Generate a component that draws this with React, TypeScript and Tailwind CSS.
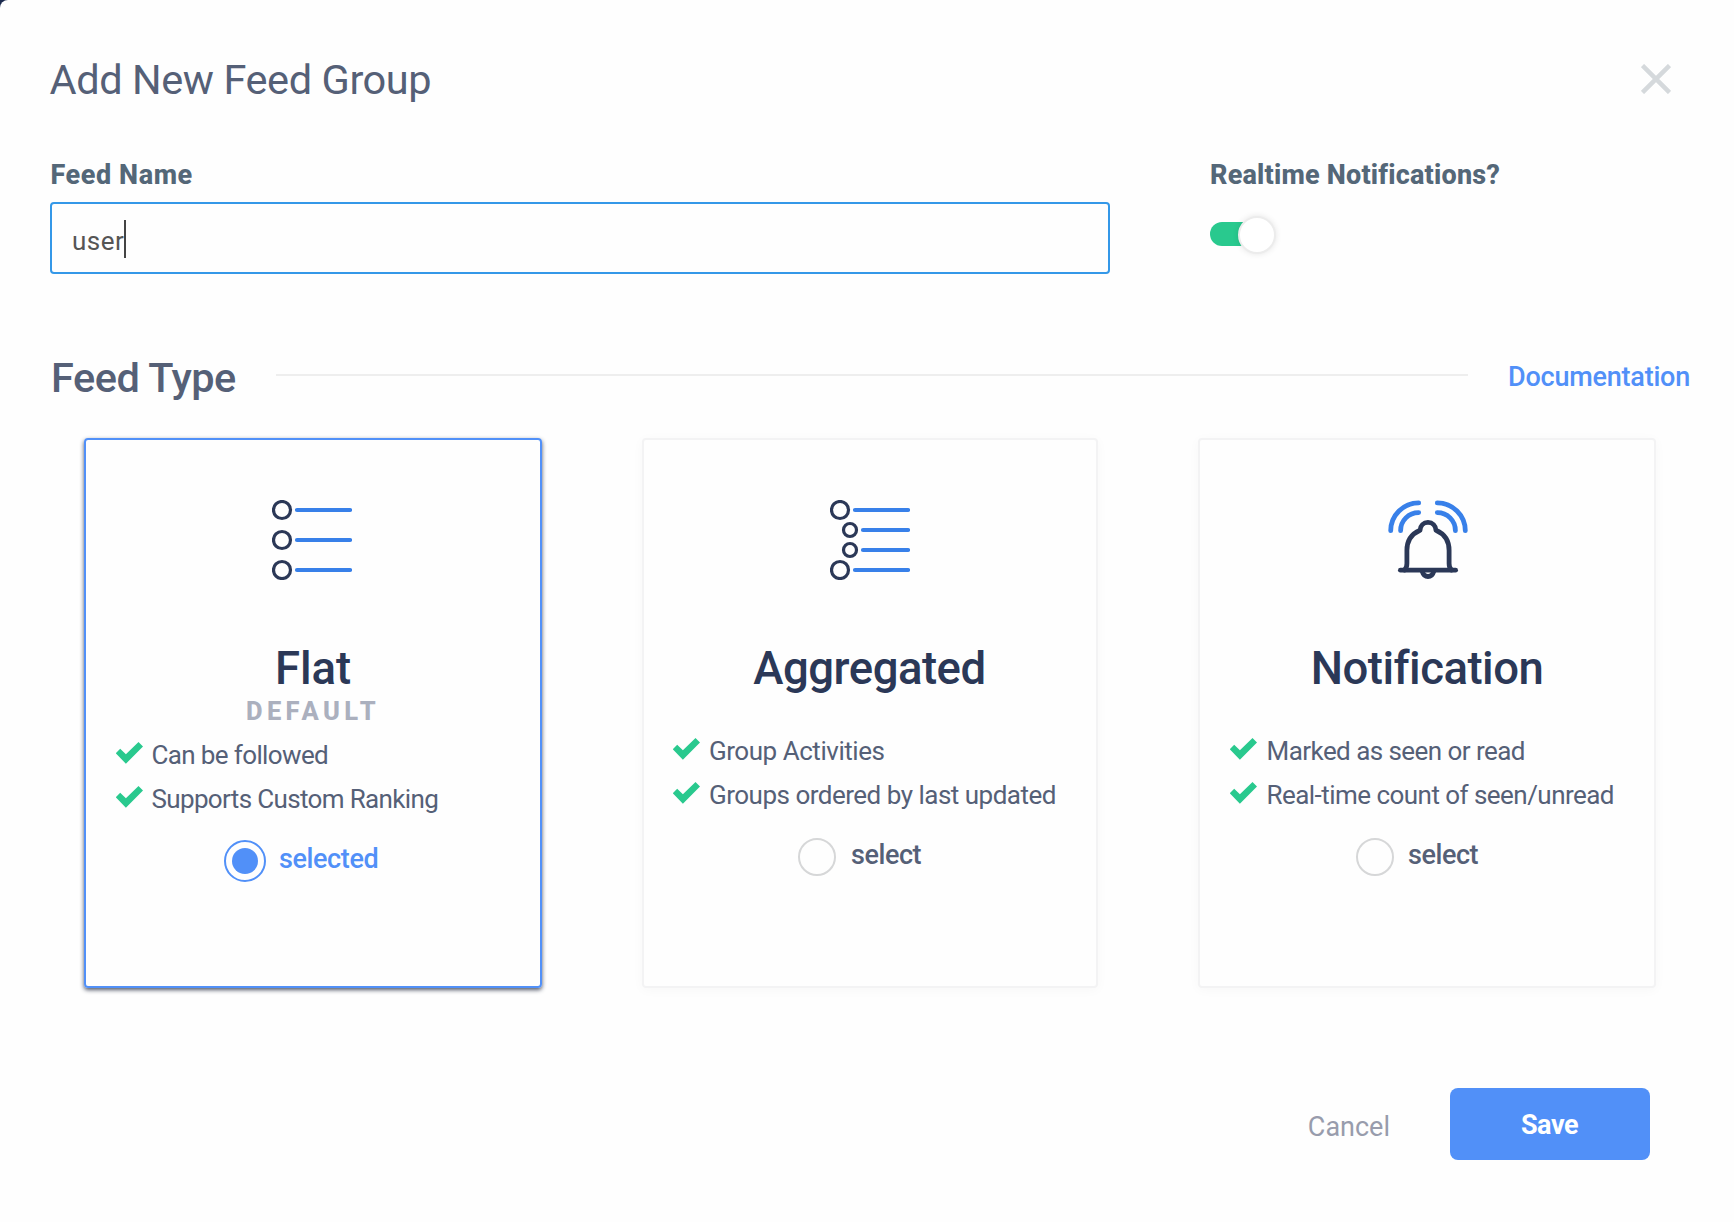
import React, { useState } from 'react';

type FeedId = 'flat' | 'aggregated' | 'notification';

function FlatIcon() {
  return (
    <svg width="80" height="80" viewBox="0 0 80 80" fill="none" className="mr-0.5 block">
      {[10, 40, 70].map((y) => (
        <g key={y}>
          <circle cx="10" cy={y} r="8.5" stroke="#2b3857" strokeWidth="3.200" />
          <path d={`M25 ${y}H78`} stroke="#3880e9" strokeWidth="4.200" strokeLinecap="round" />
        </g>
      ))}
    </svg>
  );
}

function AggregatedIcon() {
  return (
    <svg width="80" height="80" viewBox="0 0 80 80" fill="none" className="block">
      <g stroke="#2b3857" strokeWidth="3.200">
        <circle cx="10" cy="10" r="8.5" />
        <circle cx="20" cy="30" r="6.5" />
        <circle cx="20" cy="50" r="6.5" />
        <circle cx="10" cy="70" r="8.5" />
      </g>
      <path d="M25 10H78M33 30H78M33 50H78M25 70H78" stroke="#3880e9" strokeWidth="4.200" strokeLinecap="round" />
    </svg>
  );
}

function BellIcon() {
  return (
    <svg width="80" height="80" viewBox="0 0 80 80" fill="none" strokeLinecap="round" strokeLinejoin="round" className="ml-0.5 block">
      <g stroke="#3880e9" strokeWidth="4.8">
        <path d="M30.700 2.900A28 28 0 0 0 2.700 30.700" />
        <path d="M30.700 12.600A18 18 0 0 0 12.600 30.700" />
        <path d="M49.300 2.900A28 28 0 0 1 77.300 30.700" />
        <path d="M49.300 12.600A18 18 0 0 1 67.400 30.700" />
      </g>
      <g stroke="#2b3857" strokeWidth="4.8">
        <path d="M12.400 70.200H67.600" />
        <path d="M16.500 70C18.500 68.500 18.900 67 18.900 63.500V50.500C18.900 40 23.500 34 32 30.300C32.300 25.600 35.500 22.400 40 22.400S47.700 25.600 48 30.300C56.500 34 61.100 40 61.100 50.500V63.500C61.100 67 61.500 68.500 63.500 70" />
        <path d="M34.300 71.500C35.300 75 37.300 76.500 40 76.500S44.700 75 45.700 71.500" />
      </g>
    </svg>
  );
}

function Check() {
  return (
    <svg width="27" height="22" viewBox="0 0 27 22" className="mb-[5px] shrink-0">
      <path d="M-0.300 11.300L4.200 6.800L9.900 12.200L22.500 0.100L27 4.600L9.900 21.800Z" fill="#29c98e" />
    </svg>
  );
}

interface Feature {
  label: string;
  tracking: string;
}

interface CardProps {
  selected: boolean;
  onSelect: () => void;
  icon: React.ReactNode;
  title: string;
  titleClass: string;
  subtitle?: string;
  features: Feature[];
  listClass: string;
  radioClass: string;
}

function FeedCard({ selected, onSelect, icon, title, titleClass, subtitle, features, listClass, radioClass }: CardProps) {
  return (
    <button
      type="button"
      onClick={onSelect}
      className={
        'flex h-[550px] flex-col rounded-[4px] border-2 pt-[60px] text-left ' +
        (selected
          ? 'border-[#5190f8] shadow-[0_2px_4px_rgba(36,45,66,0.8)]'
          : 'border-[#f3f3f4] shadow-[0_2px_12px_rgba(0,0,0,0.03)]')
      }
    >
      <div className="flex w-full justify-center">{icon}</div>
      <h3 className={'mt-[62px] w-full text-center text-[45.5px] leading-[54px] font-medium text-[#2b3857] ' + titleClass}>{title}</h3>
      {subtitle && (
        <p className="w-full text-center text-[25.5px] leading-[30px] font-extrabold tracking-[4.35px] text-[#abb0be]">{subtitle}</p>
      )}
      <ul className={'whitespace-nowrap text-[26px] leading-[44px] font-[420] text-[#556077] ' + listClass}>
        {features.map((f) => (
          <li key={f.label} className="flex items-center gap-[inherit]">
            <Check />
            <span className={f.tracking}>{f.label}</span>
          </li>
        ))}
      </ul>
      <div className={'flex items-center text-[27px] leading-[30px] font-[480] ' + radioClass}>
        {selected ? (
          <>
            <span className="flex size-[42px] items-center justify-center rounded-full border-2 border-[#5190f8]">
              <span className="size-[26px] rounded-full bg-[#5190f8]" />
            </span>
            <span className="mb-[5px] tracking-[-0.4px] text-[#5190f8]">selected</span>
          </>
        ) : (
          <>
            <span className="size-[38px] rounded-full border-2 border-[#d6d7d8]" />
            <span className="mb-[4px] tracking-[-0.45px] text-[#556077]">select</span>
          </>
        )}
      </div>
    </button>
  );
}

export default function App() {
  const [type, setType] = useState<FeedId>('flat');
  const [realtime, setRealtime] = useState(true);

  return (
    <div className="h-[1222px] w-[1734px] bg-[#1b2a4e] font-['Roboto',sans-serif]">
      <div className="flex h-full flex-col rounded-tl-[8px] bg-[#fefefe] pt-[55px]">
        <header className="flex items-start justify-between pr-[63px] pl-[49.500px]">
          <h1 className="text-[41.5px] leading-[50px] font-[420] tracking-[-0.420px] text-[#556077]">Add New Feed Group</h1>
          <button type="button" aria-label="Close" className="mt-[9px]">
            <svg width="30" height="30" viewBox="0 0 30 30" className="block">
              <path d="M1.500 1.500L28.500 28.500M28.500 1.500L1.500 28.500" stroke="#d5d9dc" strokeWidth="4.500" />
            </svg>
          </button>
        </header>

        <div className="mt-[54px] flex gap-[100px] pl-[50px]">
          <div className="flex w-[1060px] flex-col">
            <span className="pl-[0.500px] text-[27px] leading-[32px] font-extrabold tracking-[0.580px] text-[#546778]">Feed Name</span>
            <div className="mt-[11px] flex h-[72px] items-center rounded-[4px] border-2 border-[#3498e8] pl-[20px]">
              <span className="mt-[5px] text-[26px] leading-[32px] font-[420] tracking-[0.45px] text-[#555]">user</span>
              <span className="mt-[2px] h-[38px] w-0.5 bg-[#444]" />
            </div>
          </div>
          <div className="flex flex-col">
            <span className="text-[27px] leading-[32px] font-extrabold tracking-[0.200px] text-[#546778]">Realtime Notifications?</span>
            <button type="button" aria-pressed={realtime} onClick={() => setRealtime(!realtime)} className="mt-[25px] flex items-center">
              <span className="mb-0.5 h-6 w-[50px] rounded-full bg-[#29c98e]" />
              <span className="-ml-[22px] size-[38px] rounded-full border-2 border-[#ececec] bg-white shadow-[0_0_6px_rgba(0,0,0,0.1)]" />
            </button>
          </div>
        </div>

        <div className="mt-[79px] flex items-center pr-[44px] pl-[51px]">
          <h2 className="w-[225px] text-[41.5px] leading-[50px] font-[490] tracking-[-0.50px] text-[#556077]">Feed Type</h2>
          <span className="mb-[6px] h-0.5 w-[1192px] bg-[#eee]" />
          <a className="mb-0.5 ml-[40px] text-[27px] leading-[32px] font-[480] tracking-[-0.22px] text-[#5190f8]">Documentation</a>
        </div>

        <div className="mt-[35px] grid grid-cols-[458px_456px_458px] gap-[100px] pl-[84px]">
          <FeedCard
            selected={type === 'flat'}
            onSelect={() => setType('flat')}
            icon={<FlatIcon />}
            title="Flat"
            titleClass="tracking-[-0.1px]"
            subtitle="DEFAULT"
            listClass="mt-[7px] ml-[30px] gap-[8.500px]"
            features={[
              { label: 'Can be followed', tracking: 'tracking-[-0.63px]' },
              { label: 'Supports Custom Ranking', tracking: 'tracking-[-0.65px]' },
            ]}
            radioClass="mt-[19px] ml-[138px] gap-[13px]"
          />
          <FeedCard
            selected={type === 'aggregated'}
            onSelect={() => setType('aggregated')}
            icon={<AggregatedIcon />}
            title="Aggregated"
            titleClass="pr-px tracking-[-0.5px]"
            listClass="mt-[33px] ml-[29px] gap-[9px]"
            features={[
              { label: 'Group Activities', tracking: 'tracking-[-0.46px]' },
              { label: 'Groups ordered by last updated', tracking: 'tracking-[-0.50px]' },
            ]}
            radioClass="mt-[21px] ml-[154px] gap-[15px]"
          />
          <FeedCard
            selected={type === 'notification'}
            onSelect={() => setType('notification')}
            icon={<BellIcon />}
            title="Notification"
            titleClass="tracking-[-0.5px]"
            listClass="mt-[33px] ml-[30px] gap-[9.500px]"
            features={[
              { label: 'Marked as seen or read', tracking: 'tracking-[-0.55px]' },
              { label: 'Real-time count of seen/unread', tracking: 'tracking-[-0.54px]' },
            ]}
            radioClass="mt-[21px] ml-[156px] gap-[14px]"
          />
        </div>

        <footer className="mt-[100px] flex items-center justify-end gap-[60px] pr-[84px] text-[27px] leading-[32px]">
          <button type="button" className="mt-[5px] text-[#989cac]">Cancel</button>
          <button type="button" className="h-[72px] w-[200px] rounded-[8px] bg-[#5190f8] pt-px pr-px font-bold tracking-[-0.46px] text-white">Save</button>
        </footer>
      </div>
    </div>
  );
}
